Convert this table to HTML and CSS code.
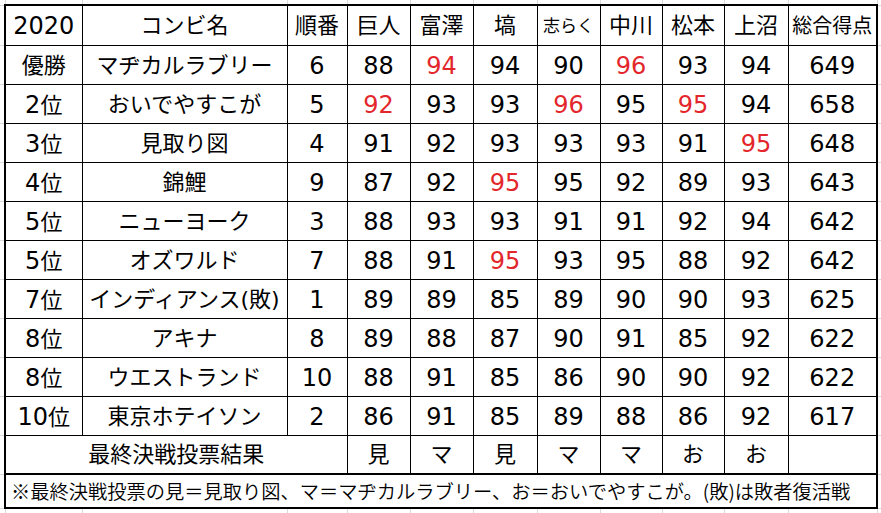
FILE: index.html
```html
<!DOCTYPE html>
<html lang="ja">
<head>
<meta charset="utf-8">
<title>2020</title>
<link rel="stylesheet" href="styles.css">
</head>
<body>
<table class="sheet">
<colgroup>
<col class="w-edge"><col class="w-rank"><col class="w-name"><col class="w-ord">
<col class="w-63"><col class="w-63"><col class="w-64"><col class="w-63"><col class="w-62"><col class="w-62"><col class="w-64">
<col class="w-total"><col class="w-edge-r">
</colgroup>
<tr class="r-top"><td class="g gl"></td><td class="g"></td><td class="g"></td><td class="g"></td><td class="g"></td><td class="g"></td><td class="g"></td><td class="g"></td><td class="g"></td><td class="g"></td><td class="g"></td><td class="g"></td><td class="g gr"></td></tr>
<tr class="r-head">
<td class="g gl"></td>
<td class="L n">2020</td><td>コンビ名</td><td>順番</td><td>巨人</td><td>富澤</td><td>塙</td><td class="s18">志らく</td><td>中川</td><td>松本</td><td>上沼</td><td class="R s20">総合得点</td>
<td class="g gr"></td>
</tr>
<tr><td class="g gl"></td><td class="L">優勝</td><td>マヂカルラブリー</td><td class="n">6</td><td class="n">88</td><td class="n r">94</td><td class="n">94</td><td class="n">90</td><td class="n r">96</td><td class="n">93</td><td class="n">94</td><td class="R n">649</td><td class="g gr"></td></tr>
<tr><td class="g gl"></td><td class="L"><span class="d">2</span>位</td><td>おいでやすこが</td><td class="n">5</td><td class="n r">92</td><td class="n">93</td><td class="n">93</td><td class="n r">96</td><td class="n">95</td><td class="n r">95</td><td class="n">94</td><td class="R n">658</td><td class="g gr"></td></tr>
<tr><td class="g gl"></td><td class="L"><span class="d">3</span>位</td><td>見取り図</td><td class="n">4</td><td class="n">91</td><td class="n">92</td><td class="n">93</td><td class="n">93</td><td class="n">93</td><td class="n">91</td><td class="n r">95</td><td class="R n">648</td><td class="g gr"></td></tr>
<tr><td class="g gl"></td><td class="L"><span class="d">4</span>位</td><td>錦鯉</td><td class="n">9</td><td class="n">87</td><td class="n">92</td><td class="n r">95</td><td class="n">95</td><td class="n">92</td><td class="n">89</td><td class="n">93</td><td class="R n">643</td><td class="g gr"></td></tr>
<tr><td class="g gl"></td><td class="L"><span class="d">5</span>位</td><td>ニューヨーク</td><td class="n">3</td><td class="n">88</td><td class="n">93</td><td class="n">93</td><td class="n">91</td><td class="n">91</td><td class="n">92</td><td class="n">94</td><td class="R n">642</td><td class="g gr"></td></tr>
<tr><td class="g gl"></td><td class="L"><span class="d">5</span>位</td><td>オズワルド</td><td class="n">7</td><td class="n">88</td><td class="n">91</td><td class="n r">95</td><td class="n">93</td><td class="n">95</td><td class="n">88</td><td class="n">92</td><td class="R n">642</td><td class="g gr"></td></tr>
<tr><td class="g gl"></td><td class="L"><span class="d">7</span>位</td><td>インディアンス(敗)</td><td class="n">1</td><td class="n">89</td><td class="n">89</td><td class="n">85</td><td class="n">89</td><td class="n">90</td><td class="n">90</td><td class="n">93</td><td class="R n">625</td><td class="g gr"></td></tr>
<tr><td class="g gl"></td><td class="L"><span class="d">8</span>位</td><td>アキナ</td><td class="n">8</td><td class="n">89</td><td class="n">88</td><td class="n">87</td><td class="n">90</td><td class="n">91</td><td class="n">85</td><td class="n">92</td><td class="R n">622</td><td class="g gr"></td></tr>
<tr><td class="g gl"></td><td class="L"><span class="d">8</span>位</td><td>ウエストランド</td><td class="n">10</td><td class="n">88</td><td class="n">91</td><td class="n">85</td><td class="n">86</td><td class="n">90</td><td class="n">90</td><td class="n">92</td><td class="R n">622</td><td class="g gr"></td></tr>
<tr><td class="g gl"></td><td class="L"><span class="d">10</span>位</td><td>東京ホテイソン</td><td class="n">2</td><td class="n">86</td><td class="n">91</td><td class="n">85</td><td class="n">89</td><td class="n">88</td><td class="n">86</td><td class="n">92</td><td class="R n">617</td><td class="g gr"></td></tr>
<tr><td class="g gl"></td><td class="L" colspan="3">最終決戦投票結果</td><td>見</td><td>マ</td><td>見</td><td>マ</td><td>マ</td><td>お</td><td>お</td><td class="R"></td><td class="g gr"></td></tr>
<tr class="r-note"><td class="g gl"></td><td class="L R note" colspan="11">※最終決戦投票の見＝見取り図、マ＝マヂカルラブリー、お＝おいでやすこが。(敗)は敗者復活戦</td><td class="g gr"></td></tr>
<tr class="r-bot"><td class="g gl"></td><td class="g"></td><td class="g"></td><td class="g"></td><td class="g"></td><td class="g"></td><td class="g"></td><td class="g"></td><td class="g"></td><td class="g"></td><td class="g"></td><td class="g"></td><td class="g gr"></td></tr>
</table>
</body>
</html>
```
FILE: styles.css
```css
html, body {
  margin: 0;
  padding: 0;
  background: #fff;
}
.sheet {
  border-collapse: collapse;
  table-layout: fixed;
  width: 881px;
  color: #000;
}
.w-edge { width: 5px; }
.w-rank { width: 77px; }
.w-name { width: 205px; }
.w-ord { width: 60px; }
.w-62 { width: 62px; }
.w-63 { width: 63px; }
.w-64 { width: 64px; }
.w-total { width: 89px; }
.w-edge-r { width: 4px; }

.sheet td {
  border: 1px solid #000;
  padding: 0;
  padding-top: 2px;
  text-align: center;
  vertical-align: middle;
  font-family: "DejaVu Sans", "Noto Sans CJK JP", sans-serif;
  font-size: 22px;
  line-height: 1;
  white-space: nowrap;
  overflow: hidden;
}
.sheet td.g {
  border: 1px solid #dadada;
  padding: 0;
}
.sheet td.gl { border-left: none; }
.sheet td.gr { border-right: none; }
.r-top td.g { border-top: none; }
.r-bot td.g { border-bottom: none; }

.sheet tr { height: 39px; }
.sheet tr.r-top { height: 5px; }
.sheet tr.r-head { height: 40px; }
.sheet tr.r-note { height: 34px; }
.sheet tr.r-bot { height: 5px; }

.r-head td:not(.g) { border-top: 2px solid #000; }
.sheet td.L { border-left: 2px solid #000; }
.sheet td.R { border-right: 2px solid #000; }
.r-note td.note {
  border-top: 2px solid #000;
  border-bottom: 2px solid #000;
  text-align: left;
  padding-left: 5px;
  font-family: "Noto Sans CJK JP", sans-serif;
  font-size: 19.25px;
  font-weight: 350;
}

.sheet td.n, .sheet .d { font-size: 24px; }
.sheet td.r { color: #e3262b; }
.sheet td.s18 { font-size: 17px; }
.sheet td.s20 { font-size: 20px; }
```
